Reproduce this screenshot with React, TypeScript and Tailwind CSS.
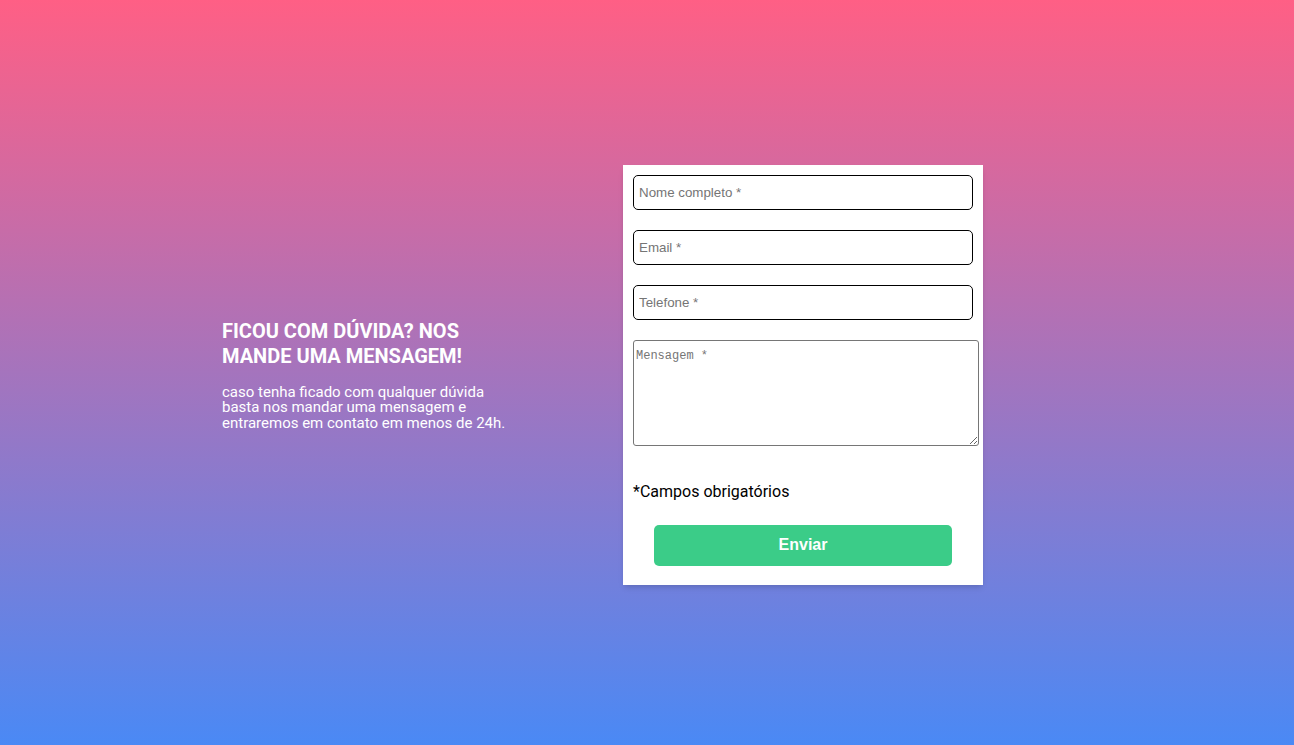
import React from 'react';

export default function App() {
  return (
    <div
      className="flex h-screen w-full items-center bg-[linear-gradient(to_bottom,#ff5f85,#4a89f5)] pl-[222px]"
      style={{ fontFamily: 'Roboto, sans-serif' }}
    >
      <div className="w-[401px] shrink-0 pt-[5px]">
        <div className="w-[290px] text-white">
          <h1 className="text-[20px] font-bold uppercase leading-[25px]">
            Ficou com dúvida? Nos mande uma mensagem!
          </h1>
          <p className="mt-[16px] text-[15px] leading-[15.5px]">
            caso tenha ficado com qualquer dúvida basta nos mandar uma mensagem e entraremos em contato em menos de 24h.
          </p>
        </div>
      </div>

      <form className="mt-[4px] w-[360px] shrink-0 bg-white p-[10px] pb-[19px] shadow-md">
        <input
          type="text"
          placeholder="Nome completo *"
          className="mb-[20px] block h-[35px] w-full rounded-[5px] border border-black px-[5px] text-[13.33px] placeholder:text-[#757575]"
          style={{ fontFamily: '"Liberation Sans", Arial, sans-serif' }}
        />
        <input
          type="email"
          placeholder="Email *"
          className="mb-[20px] block h-[35px] w-full rounded-[5px] border border-black px-[5px] text-[13.33px] placeholder:text-[#757575]"
          style={{ fontFamily: '"Liberation Sans", Arial, sans-serif' }}
        />
        <input
          type="tel"
          placeholder="Telefone *"
          className="mb-[20px] block h-[35px] w-full rounded-[5px] border border-black px-[5px] text-[13.33px] placeholder:text-[#757575]"
          style={{ fontFamily: '"Liberation Sans", Arial, sans-serif' }}
        />
        <textarea
          placeholder="Mensagem *"
          className="block h-[106px] w-[346px] resize rounded-[3px] border border-[#767676] px-[2px] pb-[2px] pt-[6px] text-[12px] placeholder:text-[#757575]"
          style={{ fontFamily: '"Liberation Mono", monospace' }}
        />
        <p className="mt-[36px] text-[16px] leading-[19px] text-black">*Campos obrigatórios</p>
        <div className="mt-[24px] flex justify-center">
          <button
            type="button"
            className="h-[41px] w-[298px] rounded-[5px] bg-[#3bcc88] text-[16px] font-bold text-white"
            style={{ fontFamily: '"Liberation Sans", Arial, sans-serif' }}
          >
            Enviar
          </button>
        </div>
      </form>
    </div>
  );
}
